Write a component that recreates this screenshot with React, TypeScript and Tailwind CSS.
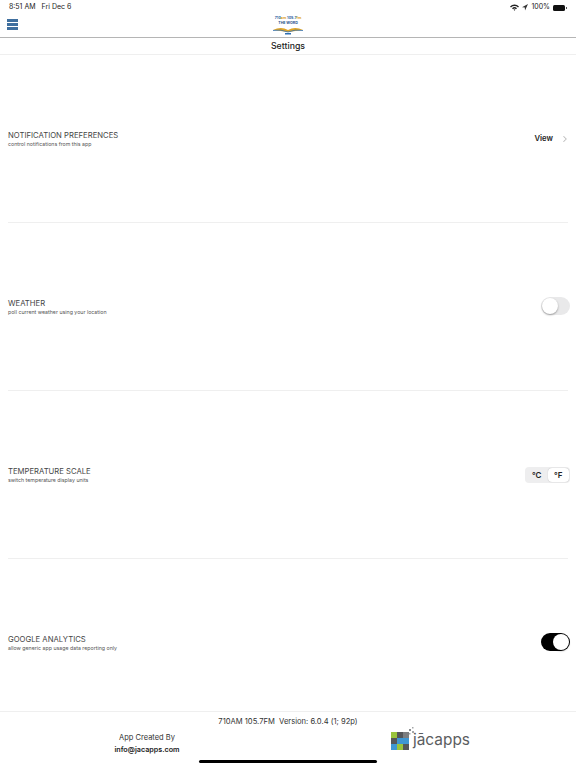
import React from 'react';
import { ChevronRight } from 'lucide-react';

const SettingRow: React.FC<{
  title: string;
  subtitle: string;
  border?: boolean;
  children: React.ReactNode;
}> = ({ title, subtitle, border = true, children }) => (
  <div className={`mx-2 flex h-[168px] shrink-0 items-center justify-between ${border ? 'border-b border-[#efefef]' : ''}`}>
    <div className="pt-px">
      <div className="text-[7.7px] leading-[10px] text-[#444]">{title}</div>
      <div className="text-[5.25px] leading-[7px] text-[#555]">{subtitle}</div>
    </div>
    {children}
  </div>
);

const Toggle: React.FC<{ on?: boolean }> = ({ on = false }) => (
  <div className={`-mr-[2px] mb-[2px] flex h-[18px] w-[29px] rounded-full p-px ${on ? 'justify-end bg-black' : 'justify-start bg-[#e9e9ea]'}`}>
    <div className="h-4 w-4 rounded-full bg-white shadow-[0_1px_2px_rgba(0,0,0,0.35)]" />
  </div>
);

const Logo: React.FC = () => (
  <div className="flex w-8 flex-col items-center">
    <div className="whitespace-nowrap text-[3.6px] font-bold leading-[5px] text-[#1f5c9e]">
      710<span className="text-[#e0a526]">am</span> 105.7<span className="text-[#e0a526]">fm</span>
    </div>
    <div className="text-[3.6px] font-bold leading-[5px] text-[#1f4f8a]">THE WORD</div>
    <svg width="32" height="9" viewBox="0 0 32 9">
      <path d="M1 4 Q9 0 16 4 Q23 0 31 4 L16 6 Z" fill="#e0a526" />
      <path d="M1 4.5 Q9 3 16 6 Q23 3 31 4.5" stroke="#2f6fb0" strokeWidth="0.8" fill="none" />
      <rect x="13" y="7" width="6" height="1.5" fill="#2f6fb0" />
    </svg>
  </div>
);

const JacappsMark: React.FC = () => (
  <svg width="27" height="24" viewBox="0 0 27 24">
    <rect x="0" y="5" width="6" height="6" fill="#9ac43c" />
    <rect x="6" y="5" width="6" height="6" fill="#55575a" />
    <rect x="12" y="5" width="6" height="6" fill="#7c7e80" />
    <rect x="0" y="11" width="6" height="6" fill="#55575a" />
    <rect x="6" y="11" width="6" height="6" fill="#3f97d3" />
    <rect x="12" y="11" width="6" height="6" fill="#3f97d3" />
    <rect x="0" y="17" width="6" height="6" fill="#3f97d3" />
    <rect x="6" y="17" width="6" height="6" fill="#9ac43c" />
    <rect x="12" y="17" width="6" height="6" fill="#55575a" />
    <rect x="18" y="2" width="2" height="2" fill="#8a8c8e" />
    <rect x="21" y="0" width="1.5" height="1.5" fill="#a5a7a9" />
    <rect x="21" y="4" width="2" height="2" fill="#a5a7a9" />
    <rect x="18" y="6" width="1.5" height="1.5" fill="#a5a7a9" />
  </svg>
);

const App: React.FC = () => {
  return (
    <div className="relative flex h-[768px] w-[576px] flex-col overflow-hidden bg-white font-['Inter',sans-serif] text-black">
      {/* Status bar */}
      <div className="flex h-[14px] shrink-0 items-center justify-between px-[9px] pt-px text-[7px] text-[#222]">
        <div className="flex gap-[6px]">
          <span>8:51 AM</span>
          <span>Fri Dec 6</span>
        </div>
        <div className="flex items-center gap-[3px]">
          <svg width="9" height="7" viewBox="0 0 9 7">
            <path d="M0 2.4 A6.4 6.4 0 0 1 9 2.4 L8 3.4 A5 5 0 0 0 1 3.4 Z M2 4.2 A3.6 3.6 0 0 1 7 4.2 L6 5.2 A2.2 2.2 0 0 0 3 5.2 Z M3.6 5.8 A1.3 1.3 0 0 1 5.4 5.8 L4.5 6.8 Z" fill="#222" />
          </svg>
          <svg width="6" height="7" viewBox="0 0 6 7">
            <path d="M6 0 L0 3.2 L2.8 3.4 L3 6.5 Z" fill="#333" />
          </svg>
          <span>100%</span>
          <div className="h-[6px] w-[12px] rounded-[1.5px] bg-[#111]" />
          <div className="-ml-[2px] h-[2px] w-px bg-[#555]" />
        </div>
      </div>

      {/* Header */}
      <div className="relative flex h-[24px] shrink-0 items-center justify-center border-b border-[#b5b5b5]">
        <div className="absolute left-[7px] top-[5px] flex w-[11px] flex-col gap-px">
          <div className="h-[3px] bg-[#3f6f9f]" />
          <div className="h-[3px] bg-[#3f6f9f]" />
          <div className="h-[3px] bg-[#3f6f9f]" />
        </div>
        <Logo />
      </div>

      {/* Title */}
      <div className="flex h-[17px] shrink-0 items-center justify-center border-b border-[#efefef] pt-[2px] text-[8.75px] font-medium text-[#222]">
        Settings
      </div>

      <div className="min-h-0 flex-1 overflow-hidden">
        <SettingRow title="NOTIFICATION PREFERENCES" subtitle="control notifications from this app">
          <div className="-mr-[2px] flex items-center gap-[7px] pt-px">
            <span className="text-[7.7px] font-semibold text-[#222]">View</span>
            <ChevronRight className="h-[10px] w-[10px] text-[#bbb]" strokeWidth={2.5} />
          </div>
        </SettingRow>

        <SettingRow title="WEATHER" subtitle="poll current weather using your location">
          <Toggle />
        </SettingRow>

        <SettingRow title="TEMPERATURE SCALE" subtitle="switch temperature display units">
          <div className="-mr-[2px] flex h-[16px] w-[45px] rounded-[4px] bg-[#eeeeef] p-px text-[8px] font-semibold text-[#222]">
            <div className="flex flex-1 items-center justify-center">°C</div>
            <div className="flex flex-1 items-center justify-center rounded-[4px] bg-white shadow-[0_0_1px_rgba(0,0,0,0.3)]">°F</div>
          </div>
        </SettingRow>

        <SettingRow title="GOOGLE ANALYTICS" subtitle="allow generic app usage data reporting only" border={false}>
          <Toggle on />
        </SettingRow>
      </div>

      {/* Footer */}
      <div className="flex h-[57px] shrink-0 flex-col border-t border-[#efefef]">
        <div className="pt-[3px] text-center text-[7.6px] leading-[13px] text-[#333]">
          710AM 105.7FM&nbsp; Version: 6.0.4 (1; 92p)
        </div>
        <div className="flex items-start">
          <div className="mt-[4px] ml-[94px] w-[106px] text-center text-[7.5px] leading-[12px] text-[#333]">
            <div>App Created By</div>
            <div className="text-[7.2px] font-semibold text-[#222]">info@jacapps.com</div>
          </div>
          <div className="ml-[191px] -mt-[1px] flex items-end">
            <JacappsMark />
            <span className="-ml-[5px] text-[15.4px] leading-[22px] text-[#5b5d60]">jācapps</span>
          </div>
        </div>
      </div>

      {/* Home indicator */}
      <div className="absolute bottom-[5px] left-[199px] h-[3px] w-[178px] rounded-full bg-black" />
    </div>
  );
};

export default App;
